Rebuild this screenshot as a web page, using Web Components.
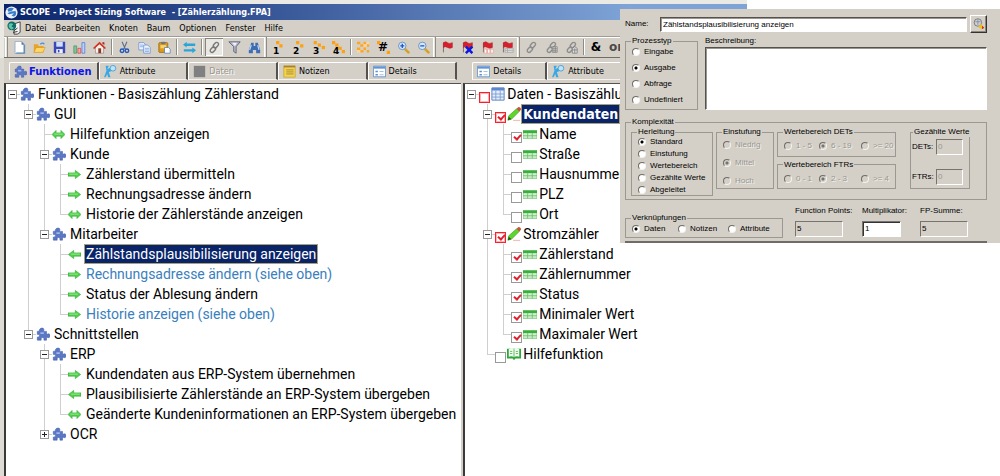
<!DOCTYPE html>
<html lang="de">
<head>
<meta charset="utf-8">
<title>SCOPE - Project Sizing Software</title>
<style>
  body { margin: 0; background: #fff; font-family: "DejaVu Sans Condensed", "DejaVu Sans", sans-serif; font-size: 9px; color: #000; }
</style>
</head>
<body>
<scope-app>
  <scope-pane>
    <scope-tabs slot="tabs">
      <scope-tab icon="puzzle" active>Funktionen</scope-tab>
      <scope-tab icon="attr">Attribute</scope-tab>
      <scope-tab icon="square" disabled>Daten</scope-tab>
      <scope-tab icon="note">Notizen</scope-tab>
      <scope-tab icon="details">Details</scope-tab>
    </scope-tabs>
    <tree-node icon="puzzle" state="open" root label="Funktionen - Basiszählung Zählerstand">
      <tree-node icon="puzzle" state="open" label="GUI">
        <tree-node icon="both" label="Hilfefunktion anzeigen"></tree-node>
        <tree-node icon="puzzle" state="open" label="Kunde">
          <tree-node icon="right" label="Zählerstand übermitteln"></tree-node>
          <tree-node icon="right" label="Rechnungsadresse ändern"></tree-node>
          <tree-node icon="both" label="Historie der Zählerstände anzeigen" last></tree-node>
        </tree-node>
        <tree-node icon="puzzle" state="open" label="Mitarbeiter" last>
          <tree-node icon="left" label="Zählstandsplausibilisierung anzeigen" selected></tree-node>
          <tree-node icon="right" label="Rechnungsadresse ändern (siehe oben)" linked></tree-node>
          <tree-node icon="right" label="Status der Ablesung ändern"></tree-node>
          <tree-node icon="right" label="Historie anzeigen (siehe oben)" linked last></tree-node>
        </tree-node>
      </tree-node>
      <tree-node icon="puzzle" state="open" label="Schnittstellen" last>
        <tree-node icon="puzzle" state="open" label="ERP">
          <tree-node icon="right" label="Kundendaten aus ERP-System übernehmen"></tree-node>
          <tree-node icon="left" label="Plausibilisierte Zählerstände an ERP-System übergeben"></tree-node>
          <tree-node icon="both" label="Geänderte Kundeninformationen an ERP-System übergeben" last></tree-node>
        </tree-node>
        <tree-node icon="puzzle" state="closed" label="OCR" last></tree-node>
      </tree-node>
    </tree-node>
  </scope-pane>
  <scope-pane>
    <scope-tabs slot="tabs" compact>
      <scope-tab icon="details">Details</scope-tab>
      <scope-tab icon="attr">Attribute</scope-tab>
    </scope-tabs>
    <tree-node icon="grid" state="open" root check="red" label="Daten - Basiszählu">
      <tree-node icon="pencil" state="open" check="red on" label="Kundendaten" selected strong>
        <tree-node icon="table" check="on" label="Name"></tree-node>
        <tree-node icon="table" check="off" label="Straße"></tree-node>
        <tree-node icon="table" check="off" label="Hausnummer"></tree-node>
        <tree-node icon="table" check="off" label="PLZ"></tree-node>
        <tree-node icon="table" check="off" label="Ort" last></tree-node>
      </tree-node>
      <tree-node icon="pencil" state="open" check="red on" label="Stromzähler">
        <tree-node icon="table" check="on" label="Zählerstand"></tree-node>
        <tree-node icon="table" check="on" label="Zählernummer"></tree-node>
        <tree-node icon="table" check="on" label="Status"></tree-node>
        <tree-node icon="table" check="on" label="Minimaler Wert"></tree-node>
        <tree-node icon="table" check="on" label="Maximaler Wert" last></tree-node>
      </tree-node>
      <tree-node icon="book" check="off" label="Hilfefunktion" last></tree-node>
    </tree-node>
  </scope-pane>
  <process-dialog slot="dialog"></process-dialog>
</scope-app>

<script>
const flag = '<path d="M3 2v12" stroke="#8d6a68" stroke-width="1.2"/><path d="M3 2q3-2 5 0t6 0v6q-3 2-6 0t-5 0z" fill="#d8202c" stroke="#a81820" stroke-width=".6"/>';
const chain = c => `<g fill="none" stroke="${c}" stroke-width="1.7"><rect x="7.5" y="1.5" width="4.6" height="7.5" rx="2.3" transform="rotate(42 10 5)"/><rect x="3.5" y="7" width="4.6" height="7.5" rx="2.3" transform="rotate(42 6 11)"/></g>`;
const steps = (...p) => `<g fill="#ffa012">${p.map(([x, y]) => `<rect x="${x}" y="${y}" width="4" height="4"/>`).join('')}</g>`;
const lens = s => `<path d="M10 10l4 4" stroke="#d9a227" stroke-width="3.4" stroke-linecap="round"/><circle cx="6.5" cy="6" r="4.6" fill="#d5e8fb" stroke="#6f94c4" stroke-width="1.2"/><path d="${s}" stroke="#1c55c0" stroke-width="1.6"/>`;
const ICONS = {
  globe: '<circle cx="8" cy="8" r="7.5" fill="#e8f0fa"/><path d="M3 4q4-3 8-1L8 6 4 7zM13 6q2 5-2 7L8 12l3-3-6 1-2-1q4-3 10-3z" fill="#3a7cc8"/>',
  app: '<path d="M9 3l6-2v12q-3 3-7 2V5z" fill="#f4f4f4" stroke="#333"/><circle cx="5.5" cy="5.5" r="5" fill="#136a62"/><path d="M2 4q3-3 5 0L5 6l3 2-3 2-3-3z" fill="#5dc6b0"/><path d="M8 11l4-3M7 13l5-1" stroke="#222" fill="none"/>',
  page: '<path d="M2.500 .5h8l4 4v11h-12z" fill="#fff" stroke="#8fa6c4"/><path d="M10.500 .5v4h4zM13 5h1.500v10.500H4V14h9z" fill="#4f7cab"/>',
  folder: '<path d="M1 4h5l1 2h6v8H1z" fill="#e6a52c"/><path d="M4 8h11l-3 6H1z" fill="#ffd668" stroke="#c98714" stroke-width=".6"/><path d="M9 4q3-3 5 0" stroke="#4c8ae0" stroke-width="1.500" fill="none"/>',
  save: '<path d="M1 1h14v14H2l-1-1z" fill="#3a47b4"/><path d="M4 1h8v6H4z" fill="#cfe0fb"/><path d="M4 10h8v5H4z" fill="#f1f1f8"/><path d="M6 11h2v3H6z" fill="#3a47b4"/>',
  chart: '<g stroke-width=".8"><path d="M1 6h3.500v9H1z" fill="#7fc69c" stroke="#3c8b5a"/><path d="M6 9h3.500v6H6z" fill="#fba8a4" stroke="#d8332e"/><path d="M11 2h3.500v13H11z" fill="#b9d2fb" stroke="#4068d8"/></g>',
  house: '<path d="M3 7v8h10V7L8 2z" fill="#f5efe8" stroke="#806060" stroke-width=".6"/><path d="M0 8.500L8 1l8 7.500-1.500 1.300L8 4 1.500 9.800z" fill="#d23324"/><path d="M11.500 1.500H14V5l-2.500-2z" fill="#a32a1e"/><path d="M6.500 9h3.500v6H6.500z" fill="#8a3a28"/>',
  cut: '<path d="M5 1l4 9M11 1L7 10" stroke="#5b6f90" stroke-width="1.400"/><circle cx="5" cy="12" r="2.200" fill="none" stroke="#2457b8" stroke-width="1.700"/><circle cx="11" cy="12" r="2.200" fill="none" stroke="#2457b8" stroke-width="1.700"/>',
  copy: '<g fill="#eef4ff" stroke="#6c93d0"><path d="M1 2h6l2 2v7H1z"/><path d="M7 5h5l3 3v7H7z"/></g><path d="M2.500 5h4M2.500 7h4M8.500 9h5M8.500 11h5M8.500 13h5" stroke="#7fa4e0"/>',
  paste: '<rect x="1" y="2" width="11" height="12" rx="1" fill="#d99b21" stroke="#9b6b11"/><path d="M4 1h5v3H4z" fill="#777"/><path d="M3 5h7v4H3z" fill="#f8d36b"/><path d="M8 8h5l2 2v5H8z" fill="#fff" stroke="#5b83bd"/>',
  swap: '<path d="M0 4.500L4.500 1v2H15v3H4.500v2zM16 11.500L11.500 8v2H1v3h10.500v2z" fill="#28a6dc"/>',
  link: chain('#777'),
  links: chain('#8c8c8c'),
  linkgrid: chain('#8c8c8c') + '<path d="M9 7h6v7H9zM9 9.500h6M9 12h6M11 7v7M13 7v7" stroke="#777" fill="#ddd" stroke-width=".8"/>',
  linkhouse: chain('#8c8c8c') + '<path d="M9 9l3-2 3 2v6H9zM9 11h6M12 9v6" stroke="#777" fill="#ddd" stroke-width=".9"/>',
  filter: '<path d="M1 1h14l-5 6v8L7 13V7z" fill="#b4b8cc" stroke="#565a70"/><path d="M5 2h6L8.500 6z" fill="#f1f3fb"/>',
  find: '<path d="M4 2h3v4h2V2h3l3 9v4h-5v-4H6v4H1v-4z" fill="#3f6db4"/><path d="M4 5l-2 6M12 5l1.500 6" stroke="#c3d6f5" stroke-width="1.500"/>',
  n1: steps([5, 0], [9, 4]),
  n2: steps([5, 0], [10, 4]),
  n3: steps([2, 0], [7, 3], [12, 6]),
  n4: steps([0, 0], [4, 3], [8, 7], [12, 11]),
  hash: steps([0, 0], [12, 12]),
  checker: '<path d="M0 1h4v3H0zM8 1h3v3H8zM4 4h4v3H4zM12 4h3v3h-3zM0 8h4v3H0zM8 8h3v3H8zM4 11h4v3H4zM12 11h3v3h-3z" fill="#ffa51e"/><path d="M12 1h3v3h-3zM8 4h4v3H8zM0 11h4v3H0z" fill="#ffd490"/>',
  zoomin: lens('M4 6h5M6.500 3.500v5'),
  zoomout: lens('M4 6h5'),
  flag,
  flagx: flag + '<path d="M6 7l8 8M14 7l-8 8" stroke="#0a18e0" stroke-width="3"/>',
  flagr: flag + '<path d="M4 10h3v5H4zM8 10h3v5H8zM12 10h3v5h-3z" fill="#fff" stroke="#ef9b98" stroke-width=".9"/>',
  flagg: flag + '<path d="M5 9h10v5H5zM5 11.500h10M8 9v5" fill="#ddd" stroke="#a5a5a5" stroke-width=".9"/>',
  puzzle: '<path d="M4 4.500C3 1 9 0 9 3L8.500 5H12v3.500q4-2 4 1.500t-4 1.500V15H9q1-3-1.500-3T6 15H1.500v-3.500Q4 12 4 10T1.500 8.500V5z" fill="#5a78c4" stroke="#3c56a6" stroke-width=".6"/><path d="M5 6h4v2H5z" fill="#9fb6ea"/>',
  both: '<path d="M0 8l5-5v3h6V3l5 5-5 5v-3H5v3z" fill="#4fd04a" stroke="#2ba32c" stroke-width=".7"/><path d="M3 7.500h10" stroke="#a8f09c"/>',
  right: '<path d="M0 6h9V3l6.500 5L9 13v-3H0z" fill="#4fd04a" stroke="#2ba32c" stroke-width=".7"/><path d="M1.500 7.500H12" stroke="#a8f09c"/>',
  left: '<path d="M16 6H7V3L.5 8 7 13v-3h9z" fill="#4fd04a" stroke="#2ba32c" stroke-width=".7"/><path d="M4 7.500h10.500" stroke="#a8f09c"/>',
  attr: '<path d="M2 1h4l-2 4 5-2 1 4-4 2 2 6H5l-1-4-2 4H0l3-8z" fill="#39a9e6"/><circle cx="11" cy="4" r="3.500" fill="#bfe3f8" stroke="#3c9ad4"/>',
  square: '<path d="M1 1h14v14H1z" fill="#808080"/>',
  note: '<path d="M1 1h14v14H1z" fill="#f5d44c" stroke="#c39a20" stroke-width=".8"/><path d="M1 1h14v2H1z" fill="#a9803a"/><path d="M4 6h9M4 8.500h9M4 11h9" stroke="#98803a"/>',
  details: '<path d="M.5 1.500h15v13H.5z" fill="#fff" stroke="#5488c8"/><path d="M1 2h14v2.500H1z" fill="#5f95dc"/><path d="M3 7h3v2H3zM3 11h3v2H3z" fill="#5c8ed0"/><path d="M8 8h5M8 12h5" stroke="#8cb0de"/>',
  grid: '<path d="M1 1h14v14H1z" fill="#e3eeff" stroke="#5076b4"/><path d="M1 1h14v3H1z" fill="#5c88cf"/><path d="M1 8h14M1 11.500h14M5.500 4v11M10.500 4v11" stroke="#7c9dcb"/>',
  table: '<path d="M0 4h16v9H0z" fill="#d2f0d0" stroke="#6cc06c" stroke-width=".8"/><path d="M0 4h16v3H0z" fill="#39ae3d"/><path d="M0 10h16M5.300 7v6M10.600 7v6" stroke="#6cc06c"/>',
  pencil: '<path d="M1 15l1-5L11 2l3 3-9 9z" fill="#5fd62c" stroke="#3a9a1c" stroke-width=".7"/><path d="M11 2l2-2q3 0 3 3l-2 2z" fill="#c8503c"/><path d="M1 15l1-4 3 3z" fill="#2a4a1a"/><path d="M7 15.300h8" stroke="#f2a9a0"/>',
  book: '<path d="M0 2h16v11H9.500L8 15l-1.500-2H0z" fill="#2da838"/><path d="M2 2.500q4-2 6 0 2-2 6 0V11q-4-1-6 .8Q6 10 2 11z" fill="#f2fff0"/><path d="M8 2.500v9M3.500 5H6M3.500 7.500H6M10 5h2.500M10 7.500h2.500" stroke="#52ae55"/>',
  calc: '<circle cx="6.500" cy="6" r="5" fill="#d0d0d0" stroke="#666"/><path d="M3 5h7M6.500 2v7" stroke="#6688b0"/><path d="M10 8l5 5-4 2-4-3z" fill="#f0c020"/><path d="M12 10l3 3-3 2z" fill="#d03018"/>'
};
const svg = (n, s = 14) => `<svg width="${s}" height="${s}" viewBox="0 0 16 16" aria-hidden="true">${ICONS[n] ?? ''}</svg>`;
const define = (name, render) => customElements.define(name, class extends HTMLElement {
  constructor() { super(); this.attachShadow({ mode: 'open' }); }
  connectedCallback() { if (!this.shadowRoot.hasChildNodes()) this.shadowRoot.innerHTML = render(this); }
});

define('title-bar', () => `<style>
  :host { display: flex; align-items: center; gap: 2px; height: 16px; padding-left: 1px; color: #fff; font-weight: bold;
    background: linear-gradient(90deg, #0a246a, #3f5f9f 42%, #7ea3d6 84%); }
  span { white-space: pre; } svg { display: block; }
</style>${svg('globe', 13)}<span>SCOPE - Project Sizing Software  - [Zählerzählung.FPA]</span>`);

define('menu-bar', () => `<style>
  :host { display: flex; align-items: center; height: 16px; padding-left: 3px; }
  nav { display: flex; gap: 9px; margin-left: 4px; }
  button { all: unset; line-height: 12px; } svg { display: block; }
</style>${svg('app', 14)}<nav>${['Datei', 'Bearbeiten', 'Knoten', 'Baum', 'Optionen', 'Fenster', 'Hilfe'].map(m => `<button>${m}</button>`).join('')}</nav>`);

define('tool-button', el => {
  const n = el.getAttribute('icon'), t = el.getAttribute('text') || '';
  return `<style>
  :host { display: block; width: 20px; height: 18px; }
  button { all: unset; display: grid; place-items: center; width: 18px; height: 18px; margin: 0 1px; }
  button > * { grid-area: 1 / 1; }
  :host([pressed]) button { background: #e9e7e2; box-shadow: inset 1px 1px #87847e, inset -1px -1px #fff; }
  span { font: bold 9px/9px "DejaVu Sans", sans-serif; align-self: end; justify-self: start; padding-left: 4px; }
  :host([big]) span { font-size: 12px; line-height: 14px; align-self: center; justify-self: center; padding-left: 0; }
  :host([icon="or"]) span { color: #4a4a4a; }
</style><button aria-label="${n}">${svg(n, 13)}<span>${t}</span></button>`;
});

define('tool-bar', () => {
  const groups = ['page folder save chart house | cut copy paste | swap | link* filter find', 'n1 n2 n3 n4 | checker hash zoomin zoomout', 'flag flagx flagr flagg', 'links linkgrid linkhouse | amp or'];
  const text = { n1: '1', n2: '2', n3: '3', n4: '4', hash: '#', amp: '&amp;', or: 'or' };
  const item = i => {
    if (i === '|') return '<i></i>';
    const n = i.replace('*', '');
    return `<tool-button icon="${n}" ${i.endsWith('*') ? 'pressed' : ''} ${['hash', 'amp', 'or'].includes(n) ? 'big' : ''} text="${text[n] || ''}"></tool-button>`;
  };
  return `<style>
  :host { display: flex; height: 20px; border-top: 1px solid #a09d96; border-bottom: 1px solid #6f6c66; box-shadow: inset 0 1px #fff; padding-left: 1px; overflow: hidden; }
  div { display: flex; align-items: center; box-shadow: inset 1px 0 #fff, inset 2px 0 #e6e3dd, inset 3px 0 #8e8b84; padding-left: 4px; }
  i { width: 1px; height: 16px; margin: 0 2px; background: #8e8b84; box-shadow: 1px 0 #fff; }
</style>${groups.map(g => `<div>${g.split(' ').map(item).join('')}</div>`).join('')}`;
});

define('scope-tabs', () => `<style>
  :host { display: flex; height: 18px; padding: 4px 4px 0 5px; --tab: 1 1 0; }
  :host([compact]) { --tab: 0 0 75px; padding-left: 9px; }
</style><slot></slot>`);

define('scope-tab', el => `<style>
  :host { flex: var(--tab); box-sizing: border-box; height: 18px; border-top: 1px solid #fff; border-left: 1px solid #fff; border-right: 2px solid #55524d; border-bottom: 1px solid #f4f3f0; border-top-left-radius: 2px; }
  button { all: unset; display: flex; align-items: center; gap: 3px; height: 16px; padding-left: 4px; }
  svg { display: block; }
  :host([active]) { border-bottom-color: transparent; }
  :host([active]) button { color: #0c14e8; font: bold 11px "DejaVu Sans Condensed", sans-serif; gap: 2px; }
  :host([disabled]) button { color: #99968f; text-shadow: 1px 1px #fff; }
</style><button ${el.hasAttribute('disabled') ? 'disabled' : ''}>${svg(el.getAttribute('icon'), 13)}<slot></slot></button>`);

define('scope-pane', () => `<style>
  :host { display: flex; flex-direction: column; background: #d4d0c8; min-width: 0; }
  main { flex: 1; margin-top: 3px; background: #fff; border-top: 1px solid #55524d; border-left: 2px solid #3c3a37; font: 14px/20px Roboto, sans-serif; }
</style><slot name="tabs"></slot><main><slot></slot></main>`);

define('tree-node', el => {
  const state = el.getAttribute('state'), check = el.getAttribute('check'), label = el.getAttribute('label'), icon = el.getAttribute('icon');
  const size = ['left', 'right', 'both'].includes(icon) ? 13 : 14;
  return `<style>
  :host { display: block; position: relative; margin-left: 16px; }
  :host([root]) { margin-left: -2px; }
  :host(:not([root]))::before { content: ""; position: absolute; left: 8px; top: 0; bottom: 0; width: 1px; background: #cfcfcf; }
  :host([last])::before { bottom: auto !important; height: 10px; }
  .row { display: flex; align-items: center; height: 20px; white-space: nowrap; }
  .toggle { position: relative; width: 16px; height: 20px; display: grid; place-items: center; background: linear-gradient(#cfcfcf, #cfcfcf) 8px 10px / 8px 1px no-repeat; }
  .toggle button { all: unset; box-sizing: border-box; width: 9px; height: 9px; border: 1px solid #999; background: linear-gradient(#222, #222) center / 5px 1px no-repeat, #fff; }
  .toggle button.closed { background: linear-gradient(#222, #222) center / 5px 1px no-repeat, linear-gradient(#222, #222) center / 1px 5px no-repeat, #fff; }
  input { appearance: none; position: relative; box-sizing: border-box; width: 11px; height: 11px; margin: 6px 1px 0 0; border: 1px solid #999; background: #fff; }
  input.red { border-color: #f8202c; box-shadow: inset 0 0 0 1px #ffb4b4; }
  input:checked::after { content: ""; position: absolute; left: 3px; top: 0; width: 3px; height: 5px; border: solid #e02030; border-width: 0 2px 2px 0; transform: rotate(42deg); }
  .ico { width: 18px; } .check .ico { width: 16px; }
  svg { display: block; }
  .label { padding: 0 1px; margin-left: -1px; line-height: 18px; color: inherit; }
  :host([linked]) .label { color: #3a80bc; }
  :host([selected]) .label { background: #0a246a; color: #fff; outline: 1px solid #a8a078; }
  :host([strong]) .label { font: bold 14px/18px "DejaVu Sans Condensed", sans-serif; }
</style><div class="row${check ? ' check' : ''}"><span class="toggle">${state ? `<button class="${state}" aria-label="${state === 'open' ? 'Zuklappen' : 'Aufklappen'}"></button>` : ''}</span>${check ? `<input id="c" type="checkbox" class="${check}" ${check.includes('on') ? 'checked' : ''}>` : ''}<span class="ico">${svg(icon, size)}</span>${check ? `<label class="label" for="c">${label}</label>` : `<span class="label">${label}</span>`}</div><slot></slot>`;
});

define('radio-box', el => {
  const opts = el.getAttribute('options').split('|'), sel = +el.getAttribute('value'), dis = el.hasAttribute('disabled');
  return `<style>
  :host { display: block; }
  fieldset { box-sizing: border-box; height: 100%; margin: 0; min-width: 0; border: 1px solid #9b9891; padding: 0 0 0 6px; }
  legend { padding: 0 1px; margin-left: -1px; line-height: 10px; height: 10px; white-space: nowrap; }
  div { display: grid; gap: var(--gap, 2px); padding-top: var(--top, 0px); }
  :host([row]) div { grid-template-columns: var(--cols); gap: 0; }
  label { display: flex; align-items: center; gap: 4px; line-height: 10px; height: 10px; white-space: nowrap; }
  input { appearance: none; box-sizing: border-box; width: 8px; height: 8px; margin: 0; border-radius: 50%; border: 1px solid; border-color: #6f6c66 #f4f3f0 #f4f3f0 #6f6c66; background: #fff; }
  input:checked { background: radial-gradient(circle, #000 0 1px, #fff 2px); }
  input:disabled { background: #d4d0c8; }
  input:disabled:checked { background: radial-gradient(circle, #77746e 0 1px, #d4d0c8 2px); }
  input:disabled + span { color: #99968f; text-shadow: 1px 1px #f2f0ec; }
</style><fieldset><legend>${el.getAttribute('label')}</legend><div>${opts.map((o, i) => `<label><input type="radio" name="r" ${i === sel ? 'checked' : ''} ${dis ? 'disabled' : ''}><span>${o}</span></label>`).join('')}</div></fieldset>`;
});

define('value-field', el => `<style>
  :host { display: block; }
  label { display: flex; flex-direction: column; gap: 5px; line-height: 10px; white-space: nowrap; }
  :host([inline]) label { flex-direction: row; align-items: center; gap: 0; justify-content: space-between; }
  input { box-sizing: border-box; width: var(--w, 48px); height: 16px; margin: 0; padding: 0 1px 2px; font: inherit; border: 1px solid; border-color: #77746e #fff #fff #77746e; background: #d4d0c8; border-radius: 0; }
  :host([editable]) input { background: #fff; box-shadow: inset 1px 1px #333; padding-left: 2px; }
  input:disabled { color: #99968f; }
</style><label>${el.getAttribute('label')}<input value="${el.getAttribute('value')}" ${el.hasAttribute('editable') ? '' : el.hasAttribute('inline') ? 'disabled' : 'readonly'}></label>`);

define('process-dialog', () => `<style>
  :host { display: block; box-sizing: border-box; background: #d4d0c8; padding: 6px 13px 0 5px; font: 8px/10px "Liberation Sans", Arial, sans-serif; }
  .name { display: flex; align-items: center; }
  .name label { width: 35px; }
  .name input { flex: 1; min-width: 0; box-sizing: border-box; height: 15px; margin: 0 3px 0 0; padding: 0 2px; font: inherit; border: 1px solid; border-color: #55524d #fff #fff #55524d; box-shadow: inset 1px 1px #99968f; }
  .name button { box-sizing: border-box; width: 17px; height: 18px; padding: 0; display: grid; place-items: center; background: #d4d0c8; border: 1px solid; border-color: #fff #333 #333 #fff; box-shadow: inset -1px -1px #8a8780; }
  .top { display: grid; grid-template-columns: 73px 1fr; gap: 7px; margin-top: 3px; }
  .top radio-box { height: 74px; --gap: 6px; --top: 1px; }
  .desc { display: flex; flex-direction: column; gap: 1px; }
  .desc textarea { flex: 1; box-sizing: border-box; width: 100%; margin: 0; resize: none; border: 1px solid; border-color: #55524d #fff #fff #55524d; box-shadow: inset 1px 1px #99968f; background: #fff; border-radius: 0; }
  fieldset { box-sizing: border-box; margin: 0; min-width: 0; border: 1px solid #9b9891; padding: 0; }
  legend { margin-left: 5px; padding: 0 1px; line-height: 10px; height: 10px; white-space: nowrap; }
  .complex { margin-top: 7px; height: 83px; }
  .inner { display: grid; grid-template-columns: 82px 58px 119px 71px; gap: 3px; padding-left: 5px; }
  .inner > :nth-child(1) { height: 69px; }
  .inner > :nth-child(2) { height: 62px; --gap: 8px; --top: 3px; }
  .ranges { display: flex; flex-direction: column; gap: 3px; height: 62px; }
  .ranges radio-box { flex: 1; --cols: 35px 42px auto; --top: 4px; }
  .counts { height: 62px; margin-left: 11px; width: 60px; }
  .counts legend { margin-left: 2px; }
  .counts div { display: flex; flex-direction: column; gap: 14px; padding: 2px 6px 0 1px; --w: 27px; }
  .foot { display: flex; justify-content: space-between; margin-top: 6px; }
  .foot radio-box { width: 158px; height: 25px; margin-top: 7px; --cols: 46px 50px auto; --top: 1px; }
  .sums { display: grid; grid-template-columns: 67px 58px 48px; margin-right: 19px; }
  hr { margin: 3px 0 0; border: 0; height: 2px; background: #6f6c66; }
</style>
<div class="name"><label for="n">Name:</label><input id="n" value="Zählstandsplausibilisierung anzeigen"><button aria-label="Bearbeiten">${svg('calc', 12)}</button></div>
<div class="top"><radio-box label="Prozesstyp" options="Eingabe|Ausgabe|Abfrage|Undefiniert" value="1"></radio-box>
  <div class="desc"><label for="d">Beschreibung:</label><textarea id="d"></textarea></div></div>
<fieldset class="complex"><legend>Komplexität</legend><div class="inner">
  <radio-box label="Herleitung" options="Standard|Einstufung|Wertebereich|Gezählte Werte|Abgeleitet" value="0"></radio-box>
  <radio-box label="Einstufung" options="Niedrig|Mittel|Hoch" value="1" disabled></radio-box>
  <div class="ranges"><radio-box row label="Wertebereich DETs" options="1 - 5|6 - 19|&gt;= 20" value="1" disabled></radio-box>
    <radio-box row label="Wertebereich FTRs" options="0 - 1|2 - 3|&gt;= 4" value="1" disabled></radio-box></div>
  <fieldset class="counts"><legend>Gezählte Werte</legend><div><value-field inline label="DETs:" value="0"></value-field><value-field inline label="FTRs:" value="0"></value-field></div></fieldset>
</div></fieldset>
<div class="foot"><radio-box row label="Verknüpfungen" options="Daten|Notizen|Attribute" value="0"></radio-box>
  <div class="sums"><value-field label="Function Points:" value="5"></value-field><value-field label="Multiplikator:" value="1" editable style="--w: 39px"></value-field><value-field label="FP-Summe:" value="5"></value-field></div></div>
<hr>`);

define('scope-app', () => `<style>
  :host { display: flex; flex-direction: column; position: relative; min-height: 100vh; }
  header { margin-right: 253px; background: #d4d0c8; border-top: 4px solid #ebe9e3; border-left: 4px solid #ebe9e3; }
  .panes { flex: 1; display: grid; grid-template-columns: 46fr 54fr; border-left: 4px solid #dedbd4; background: #d4d0c8; gap: 2px; }
  slot[name=dialog]::slotted(*) { position: absolute; top: 9px; right: 0; width: 380px; }
</style><header><title-bar></title-bar><menu-bar></menu-bar><tool-bar></tool-bar></header><div class="panes"><slot></slot></div><slot name="dialog"></slot>`);
</script>
</body>
</html>
